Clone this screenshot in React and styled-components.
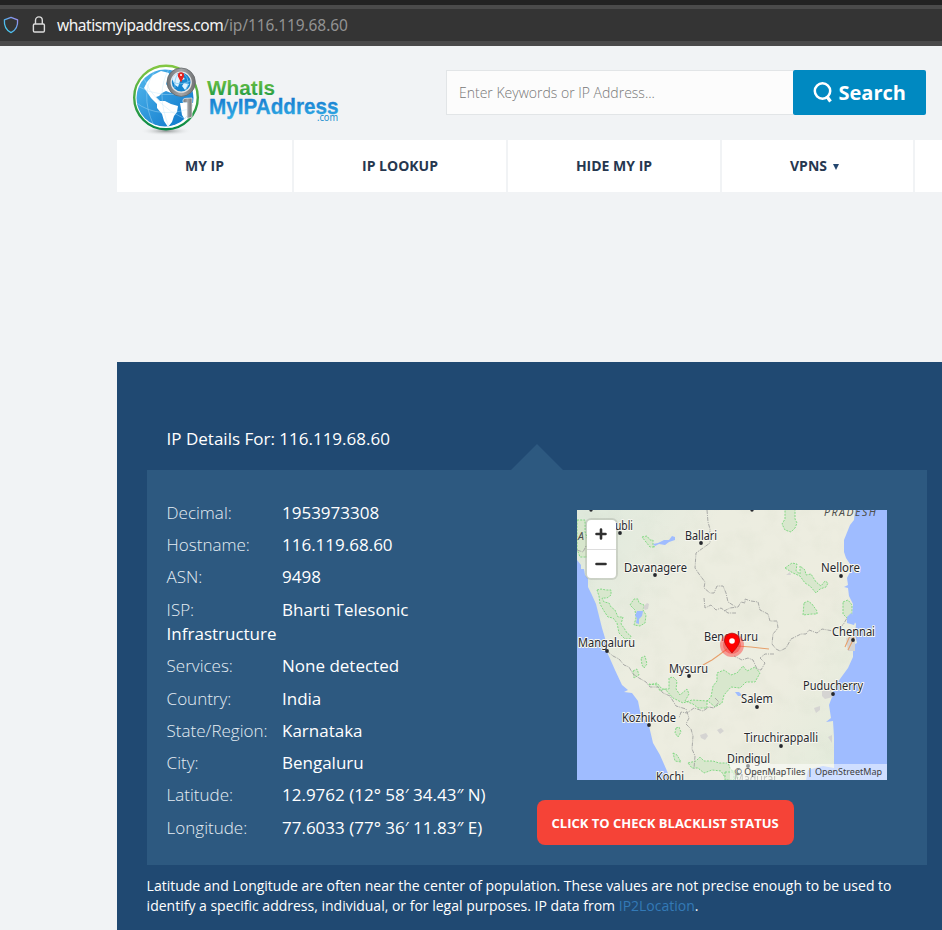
import React from "react";
import styled, { createGlobalStyle } from "styled-components";

const Global = createGlobalStyle`
  *, *::before, *::after { box-sizing: border-box; }
  body { margin: 0; background: #f1f3f5; font-family: "Open Sans", "Noto Sans", sans-serif; overflow: hidden; }
`;

const Page = styled.div`
  width: 942px;
  height: 930px;
  overflow: hidden;
  background: #f1f3f5;
`;

const BrowserBar = styled.div`
  height: 46px;
  border-top: 5px solid #222222;
  background: #4a4a4a;
  padding: 4px 0 5px;
`;

const AddressField = styled.div`
  display: flex;
  align-items: center;
  height: 32px;
  background: #343434;
  color: #f4f4f4;
  font: 400 15.5px/34px "Noto Sans", sans-serif;
  white-space: nowrap;

  svg { flex: none; display: block; }
`;

const Url = styled.span`
  margin-left: 10px;
  letter-spacing: -0.48px;
`;

const UrlPath = styled.span`
  color: #929292;
  letter-spacing: -0.1px;
`;

const Header = styled.header`
  display: flex;
  height: 94px;
  padding: 14px 0 0 130px;
`;

const LogoBox = styled.a`
  width: 316px;
  height: 80px;
  flex: none;
`;

const SearchForm = styled.div`
  display: flex;
  height: 45px;
  margin-top: 10px;
`;

const SearchField = styled.div`
  width: 347px;
  border: 1px solid #e2e5e7;
  border-right: 0;
  background: #fcfcfc;
  padding-left: 12px;
  font-size: 14px;
  font-weight: 300;
  line-height: 43px;
  color: #777777;
`;

const SearchButton = styled.div`
  display: flex;
  align-items: center;
  width: 133px;
  padding-left: 20px;
  gap: 5.5px;
  border-radius: 2px;
  background: #0089c1;
  color: #ffffff;
  font-size: 20px;
  font-weight: 700;
`;

const Nav = styled.nav`
  display: flex;
  gap: 2px;
  height: 52px;
  margin-left: 117px;
`;

const NavItem = styled.div`
  flex: none;
  display: flex;
  align-items: center;
  justify-content: center;
  gap: 6px;
  width: ${(p) => p.$width}px;
  padding: 0 ${(p) => p.$inset || 0}px 2px 0;
  background: #ffffff;
  color: #26374f;
  font-size: 14px;
  font-weight: 700;

  svg { margin-top: 4px; }
`;

const Main = styled.main`
  height: 568px;
  margin: 170px 0 0 116.6px;
  padding: 64px 15px 0 30px;
  background: #204972;
  color: #ffffff;
`;

const Title = styled.div`
  height: 26px;
  padding-left: 20px;
  font-size: 17px;
  line-height: 26px;
`;

const Pointer = styled.div`
  width: 52px;
  height: 26px;
  margin: -8px 0 0 364.4px;
  background: #2d5980;
  clip-path: polygon(50% 0, 100% 100%, 0 100%);
`;

const Panel = styled.section`
  display: flex;
  height: 395px;
  padding: 30.85px 40px 0 20px;
  background: #2d5980;
`;

const Details = styled.div`
  width: 370px;
  padding-right: 30px;
  font-size: 17px;
  line-height: 24.286px;
`;

const DetailRow = styled.div`
  margin-bottom: 8px;
`;

const Label = styled.span`
  display: inline-block;
  width: 115.4px;
  font-weight: 300;
  color: #e5edf3;
`;

const MapColumn = styled.div`
  width: 350px;
  padding-top: 9.15px;
`;

const MapFrame = styled.div`
  position: relative;
  width: 310px;
  height: 270px;
  margin-left: 40.4px;
  overflow: hidden;

  > svg { display: block; }
`;

const ZoomControl = styled.div`
  position: absolute;
  left: 10px;
  top: 10px;
  width: 29px;
  border-radius: 4px;
  background: #ffffff;
  box-shadow: 0 0 0 2px rgba(0, 0, 0, 0.1);
`;

const ZoomButton = styled.div`
  display: flex;
  align-items: center;
  justify-content: center;
  height: 29px;

  & + & { border-top: 1px solid #dddddd; }
`;

const Attribution = styled.div`
  position: absolute;
  right: 0;
  bottom: 0;
  width: 157px;
  height: 16px;
  padding-right: 5px;
  background: rgba(255, 255, 255, 0.5);
  color: #404040;
  font: 400 9px/16px "Noto Sans", sans-serif;
  text-align: right;
  white-space: nowrap;
`;

const StatusButton = styled.div`
  width: 257px;
  height: 45px;
  margin-top: 20px;
  border-radius: 8px;
  background: #f54337;
  font-size: 13px;
  font-weight: 700;
  line-height: 47px;
  text-align: center;
  white-space: nowrap;
`;

const Notice = styled.p`
  margin: 11px 0 0;
  font-size: 14px;
  line-height: 20px;
`;

const NoticeLink = styled.a`
  color: #337ab7;
`;

const details = [
  ["Decimal:", "1953973308"],
  ["Hostname:", "116.119.68.60"],
  ["ASN:", "9498"],
  ["ISP:", "Bharti Telesonic Infrastructure"],
  ["Services:", "None detected"],
  ["Country:", "India"],
  ["State/Region:", "Karnataka"],
  ["City:", "Bengaluru"],
  ["Latitude:", "12.9762 (12° 58′ 34.43″ N)"],
  ["Longitude:", "77.6033 (77° 36′ 11.83″ E)"],
];

/* name, left edge, baseline, width, dot x, dot y */
const cities = [
  ["ubli", 38, 20, 18, 43, 23],
  ["Ballari", 108, 30, 32, 124, 33],
  ["Davanagere", 47, 62, 63, 78, 65],
  ["Nellore", 244, 62, 39, 264, 66],
  ["Mangaluru", 1, 137, 57, 30, 141],
  ["Bengaluru", 127, 131, 54, 155, 135],
  ["Chennai", 255, 126, 43, 276, 130],
  ["Mysuru", 92, 163, 39, 112, 166],
  ["Puducherry", 226, 180, 60, 256, 184],
  ["Salem", 164, 193, 32, 180, 197],
  ["Kozhikode", 45, 212, 54, 72, 215],
  ["Tiruchirappalli", 167, 232, 74, 204, 236],
  ["Dindigul", 150, 253, 43, 171, 256],
  ["Kochi", 79, 271, 28, 93, 274],
];

const parks = [
  "M0 10l8 0v12l3 8v17h-8l-3-8z",
  "M65 27l5-1 3 4 3 0 0 6 2 1-5 0z",
  "M20 80l4-1 5 1 5 0 0 5-4 3-5 0 2 4 5 1 2 4 4 3 3 7 5 0-2 7 3 4 3 5 4 3-1 3-5 0-6-6-2-10-4-5-5-1-4-6-4-7-1-8z",
  "M53 95l4-6 4 0 1 4 5 2-1 5 3 5-1 8-5 3-6-1 2-7-1-8z",
  "M208-1h10v10l2 4-2 5-4 4-6-2-3-6 3-5z",
  "M208 58l7-5 5 1-1 7 4 3 0-8 5 4 1 5 5-1 5 8 5 4 4-5 3 2-2 4-6 2-4 4-6-7-5-3-5-7-7-3z",
  "M227 93l4-2 4 3 5 7 0 3-5 0-9 1z",
  "M266 92l5-2 4 5v12l-4 2-5-5z",
  "M64 148l4-2 2 8-3 4-2-3z",
  "M56 161l4-2 2 6-5 3z",
  "M72 175l8-2 5 6 7 0 0-11 4-1 4 4-1 8 4 6 7-6 2 5-4 7 8 3 5 4 9 0 0-7 4-4 2-11 4-5 0-8 7-3 7 5 6-2 6-7 4 5 8-4 5 6-5 9-9 0-6 6-9-1-7 8-2 8-7 4-7-6-16-1-9 3-10-5-8-9-5 2-3-6-8-1z",
  "M99 218l3-1 2 5-3 5-3-4z",
  "M96 243l4 2 4 7-6-1z",
  "M111 253l8-2 4-4 4 4 9 0 6 2 9 0 3 7 7 2 0 6-12 1-5-8-9-1-8 3-6-5-6 0z",
  "M148 262h9v8h-9z",
];

const borders = [
  "M130 0l1 12 2 7 0 14-7 5-7 5-1 15 4 6 6 8-1 6 6 5 4 0 3-7 6 0 3 7 2 9 8 5",
  "M127 88l1 10 6-3 5 5 5-2 7 5 8 0",
  "M147 101l6-3 8-1 3-5 4 1 0-4 6 2 7 1 2 8 8 4 2 7 7 0 1 7-5 6-1 10 4 5 4 2 6-3 5-9 10-5 5 0 3-4 8 3 5-4 11 2 4-4 6-2 4-7 8 3 4-5 5-4 5 2",
  "M30 141l6 5 6 3 5 6 5 2 4 7 6 4 7 4 4 5 8 0 5 6 7 3 6 10 10 3 3 9-3 6 5 5 2 7-1 13 3 7-1 13",
  "M138 188l4 4-5 6-5-1-6 4-9-3-7 5-6-1-2 6",
  "M197 144l-9 0-5 4 5 5-4 7-4-1-4-9-5-2-6 2-8-4",
  "M0 40l6 2 3-6 7 2 0-8-4-6",
];

function Shield() {
  return (
    <svg width="20" height="20" viewBox="0 0 20 20" fill="none">
      <defs>
        <linearGradient id="shieldStroke" x1="1" y1="0" x2="0" y2="1">
          <stop stopColor="#a58bf2" />
          <stop offset=".55" stopColor="#54aee9" />
          <stop offset="1" stopColor="#44def7" />
        </linearGradient>
      </defs>
      <path d="M11 2.300L17.600 4.900C18 10.500 16.300 15.200 11 17.600C5.700 15.200 4 10.500 4.400 4.900Z" stroke="url(#shieldStroke)" strokeWidth="1.3" strokeLinejoin="round" />
    </svg>
  );
}

function Lock() {
  return (
    <svg width="27" height="20" viewBox="0 0 27 20" fill="none" stroke="#dcdcdc" strokeWidth="1.4">
      <rect x="13.4" y="9" width="11" height="8" rx="1.2" />
      <path d="M15.500 9V5.300a3.400 3.400 0 0 1 6.800 0V9" />
    </svg>
  );
}

function Logo() {
  return (
    <svg width="220" height="80" viewBox="0 0 220 80">
      <defs>
        <linearGradient id="ring" x1="0" y1="0" x2="0" y2="1">
          <stop stopColor="#83c742" />
          <stop offset="1" stopColor="#078946" />
        </linearGradient>
        <linearGradient id="ocean" x1="0" y1="0" x2="1" y2="1">
          <stop stopColor="#54b9ee" />
          <stop offset="1" stopColor="#0873c8" />
        </linearGradient>
        <linearGradient id="greenText" x1="0" y1="0" x2="0" y2="1">
          <stop stopColor="#82c93e" />
          <stop offset="1" stopColor="#149548" />
        </linearGradient>
        <linearGradient id="blueText" x1="0" y1="0" x2="0" y2="1">
          <stop stopColor="#1270ca" />
          <stop offset="1" stopColor="#32afe6" />
        </linearGradient>
        <linearGradient id="metal">
          <stop stopColor="#707477" />
          <stop offset=".5" stopColor="#a5a7a9" />
          <stop offset="1" stopColor="#707173" />
        </linearGradient>
        <radialGradient id="shadow">
          <stop stopColor="#8d9191" />
          <stop offset="1" stopColor="#f1f3f5" stopOpacity="0" />
        </radialGradient>
        <clipPath id="globeClip"><circle cx="35" cy="38" r="28.5" /></clipPath>
      </defs>
      <ellipse cx="36" cy="71" rx="26" ry="4.500" fill="url(#shadow)" />
      <circle cx="36" cy="37.500" r="31.800" fill="#fff" stroke="url(#ring)" strokeWidth="2.4" />
      <circle cx="35" cy="38" r="28.5" fill="url(#ocean)" />
      <g clipPath="url(#globeClip)">
        <path d="M17 22L23 15 31 11 39 13 38 19 36 24 39 28 41 33 36 31 32 33 29 36 26 37 30 41 35 41 41 44 48 46 47 52 44 56 42 62 38 67 34 61 32 54 27 48 27 44 21 38 17 32 14 28z" fill="#fff" />
        <path d="M50 43h14v20h-7l-5-8z" fill="#fff" />
        <path d="M5 25q27 16 61 6M5 42q25 19 62 4M27 8q-19 24-3 58M39 9q-14 24 0 58M13 17q12 29 42 42" fill="none" stroke="#bce5fb" strokeWidth=".6" opacity=".65" />
      </g>
      <path d="M53 40q0-1.500 3-1.700l6-.3v19l-5 1.500V42.500h-4z" fill="url(#metal)" stroke="#f4f4f4" strokeWidth=".7" />
      <circle cx="51.200" cy="22.200" r="14.200" fill="url(#metal)" stroke="#64686b" strokeWidth=".8" />
      <circle cx="51.200" cy="22.200" r="10" fill="#1585cf" stroke="#e3e5e6" strokeWidth="1.3" />
      <path d="M42 19q3-6 8-5l5 5-5 2-2 6-3-2zM54 23l5 1-4 6-3-4z" fill="#dff3ff" />
      <path d="M43 22q7 4 17-1M45 28q-1-9 3-14M54 14q7 6 2 16" fill="none" stroke="#7bc5f1" strokeWidth=".7" />
      <path d="M51 22.500L48 16.500A3.200 3.200 0 1 1 54 16.500Z" fill="#e32420" />
      <circle cx="51" cy="15" r="1" fill="#fff" />
      <g fontFamily="Liberation Sans" fontWeight="700">
        <text x="77" y="35" fontSize="21" textLength="68" lengthAdjust="spacingAndGlyphs" fill="url(#greenText)">WhatIs</text>
        <text x="79" y="54" fontSize="22.500" textLength="129.500" lengthAdjust="spacingAndGlyphs" fill="url(#blueText)" stroke="url(#blueText)" strokeWidth=".3">MyIPAddress</text>
      </g>
      <text x="187" y="61" fontFamily="Noto Sans" fontSize="10" textLength="21" lengthAdjust="spacingAndGlyphs" fill="#188fcf">.com</text>
    </svg>
  );
}

function RegionMap() {
  return (
    <svg width="310" height="270" viewBox="0 0 310 270">
      <defs>
        <linearGradient id="land" x1="0" y1="0.2" x2="1" y2=".7">
          <stop stopColor="#e1eadd" />
          <stop offset=".3" stopColor="#ecede0" />
          <stop offset=".7" stopColor="#edede0" />
          <stop offset="1" stopColor="#e3ebdb" />
        </linearGradient>
        <filter id="relief" x="0" y="0" width="100%" height="100%">
          <feTurbulence type="fractalNoise" baseFrequency=".045" numOctaves="3" seed="8" />
          <feColorMatrix values="0 0 0 0 .45  0 0 0 0 .5  0 0 0 0 .4  .65 0 0 0 -.27" />
        </filter>
      </defs>
      <rect width="310" height="270" fill="url(#land)" />
      <rect width="310" height="270" filter="url(#relief)" opacity=".3" />
      <g fill="#d8e7cd" stroke="#79d77d" strokeWidth=".9" strokeDasharray="2 1.2">
        {parks.map((d) => <path key={d} d={d} />)}
      </g>
      <g fill="none" stroke="#a9aaa7" strokeWidth="1" strokeDasharray="4 1 1 1" strokeLinejoin="bevel">
        {borders.map((d) => <path key={d} d={d} />)}
      </g>
      <g fill="#9fbcff">
        <path d="M0 50L4 55 4 59 7 59 8 65 11 69 11 77 14 83 19 94 21 102 25 118 28 128 30 142 38 160 45 175 51 180 47 182 55 183 61 191 63 201 66 208 72 216 76 233 83 245 90 261 94 270H0z" />
        <path d="M278 0L277 10 273 15 267 30 267 42 269 48 273 54 274 60 270 68 271 75 267 77 271 78 272 86 276 94 275 107 279 114 278 125 280 133 276 135 276 147 271 158 263 169 257 178 255 187 252 195 254 208 249 212 256 211 257 227V258L246 256 238 258 231 260 229 270H310V0z" />
        <path d="M76 34l5-1 6-3 5 0 3-4 3 1 0 3-6 2-4 3-6-1-4 2zM60 101l6 0-1 5-3 3 0 5-3-1 1-5-2-2zM270 107l4-4 5 7-2 5-7-2zM158 182l4 0 4 4-5 0z" />
      </g>
      <g fill="#d5d4d2">
        <path d="M66 97l4-4 2 1-1 5-3 1zM209 65l4-3 1 3zM123 225l6-2 2 3-3 4-4-2zM140 220l4-2 3 3-4 3zM237 198l6-2 0 4-4 3zM269 128l9-2 0 15-7 0zM245 181l9-1 2 7-8 2-3-3zM251 227l4-2 0 8z" />
      </g>
      <path d="M126 155l9-5 7-5 8-6M160 136l14 1 18 2M271 140l4-8 2-6M268 137l4-9 3-4" fill="none" stroke="#e7a06b" strokeWidth="1.1" />
      <g fontFamily="Noto Sans" fontSize="12" fill="#26282d">
        {cities.map(([name, x, y, width, dotX, dotY]) => (
          <g key={name}>
            <text x={x} y={y} textLength={width} lengthAdjust="spacingAndGlyphs" stroke="#f7f7f0" strokeWidth="2" paintOrder="stroke" strokeLinejoin="round">{name}</text>
            <circle cx={dotX} cy={dotY} r="1.9" />
          </g>
        ))}
        <circle cx="14" cy="0" r="1.7" />
        <circle cx="175" cy="0" r="1.7" />
        <text x="157" y="273" opacity=".5" textLength="42" lengthAdjust="spacingAndGlyphs">Madurai</text>
      </g>
      <g fontFamily="Noto Sans" fontStyle="italic" fontSize="10.5" fill="#4e504d">
        <text x="247" y="6" textLength="52">PRADESH</text>
        <text x="1" y="30">A</text>
      </g>
      <circle cx="155" cy="135" r="12" fill="#ff3535" opacity=".45" />
      <circle cx="155" cy="135" r="9" fill="#ff2020" opacity=".4" />
      <path d="M155 143Q146.500 134 147.500 129.500A7.600 7.600 0 0 1 162.500 129.500Q163.500 134 155 143Z" fill="#ff0000" stroke="#a40b0b" strokeWidth=".7" />
      <circle cx="155" cy="131" r="2.8" fill="#fff" />
    </svg>
  );
}

export default function App() {
  return (
    <Page>
      <Global />
      <BrowserBar>
        <AddressField>
          <Shield />
          <Lock />
          <Url>whatismyipaddress.com<UrlPath>/ip/116.119.68.60</UrlPath></Url>
        </AddressField>
      </BrowserBar>
      <Header>
        <LogoBox><Logo /></LogoBox>
        <SearchForm>
          <SearchField>Enter Keywords or IP Address...</SearchField>
          <SearchButton>
            <svg width="20" height="22" viewBox="0 0 20 22" fill="none" stroke="#fff">
              <circle cx="9.500" cy="9" r="7.700" strokeWidth="2.500" />
              <path d="M13.500 14L17.500 19.500" strokeWidth="3.200" />
            </svg>
            Search
          </SearchButton>
        </SearchForm>
      </Header>
      <Nav>
        <NavItem $width={175}>MY IP</NavItem>
        <NavItem $width={212}>IP LOOKUP</NavItem>
        <NavItem $width={212}>HIDE MY IP</NavItem>
        <NavItem $width={191} $inset={6}>
          VPNS
          <svg width="6" height="6" viewBox="0 0 6 6"><path d="M0 0H6L3 6Z" fill="#24476f" /></svg>
        </NavItem>
        <NavItem $width={191} />
      </Nav>
      <Main>
        <Title>IP Details For: 116.119.68.60</Title>
        <Pointer />
        <Panel>
          <Details>
            {details.map(([label, value]) => (
              <DetailRow key={label}><Label>{label}</Label>{value}</DetailRow>
            ))}
          </Details>
          <MapColumn>
            <MapFrame>
              <RegionMap />
              <ZoomControl>
                <ZoomButton>
                  <svg width="13" height="12" viewBox="0 0 13 12" stroke="#303030" strokeWidth="2.600" strokeLinecap="round"><path d="M1.500 6h9M6 1.500v9" /></svg>
                </ZoomButton>
                <ZoomButton>
                  <svg width="13" height="12" viewBox="0 0 13 12" stroke="#303030" strokeWidth="2.600" strokeLinecap="round"><path d="M1.500 6h9" /></svg>
                </ZoomButton>
              </ZoomControl>
              <Attribution>© OpenMapTiles | OpenStreetMap</Attribution>
            </MapFrame>
            <StatusButton>CLICK TO CHECK BLACKLIST STATUS</StatusButton>
          </MapColumn>
        </Panel>
        <Notice>
          Latitude and Longitude are often near the center of population. These values are not precise enough to be used to identify a specific address, individual, or for legal purposes. IP data from <NoticeLink>IP2Location</NoticeLink>.
        </Notice>
      </Main>
    </Page>
  );
}
